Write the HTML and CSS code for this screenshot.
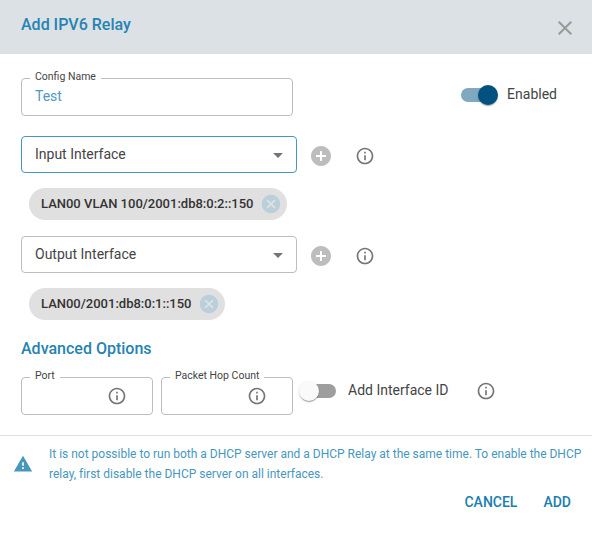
FILE: index.html
```html
<!DOCTYPE html>
<html lang="en">
<head>
<meta charset="utf-8">
<title>Add IPV6 Relay</title>
<link rel="stylesheet" href="styles.css">
</head>
<body>
<svg class="defs" aria-hidden="true">
  <symbol id="info" viewBox="0 0 24 24"><path d="M11 7h2v2h-2zm0 4h2v6h-2zm1-9C6.48 2 2 6.48 2 12s4.48 10 10 10 10-4.48 10-10S17.52 2 12 2zm0 18c-4.41 0-8-3.59-8-8s3.59-8 8-8 8 3.59 8 8-3.59 8-8 8z"/></symbol>
  <symbol id="plus" viewBox="0 0 24 24"><path d="M12 2C6.48 2 2 6.48 2 12s4.48 10 10 10 10-4.48 10-10S17.52 2 12 2zm5 11h-4v4h-2v-4H7v-2h4V7h2v4h4v2z"/></symbol>
  <symbol id="cancel" viewBox="0 0 24 24"><path d="M12 2C6.47 2 2 6.47 2 12s4.47 10 10 10 10-4.47 10-10S17.53 2 12 2zm5 13.59L15.59 17 12 13.41 8.41 17 7 15.59 10.59 12 7 8.41 8.41 7 12 10.59 15.59 7 17 8.41 13.41 12 17 15.59z"/></symbol>
  <symbol id="arrow" viewBox="0 0 24 24"><path d="M7 10l5 5 5-5z"/></symbol>
</svg>
<div class="dialog">
  <header class="header">
    <h2 class="heading title">Add IPV6 Relay</h2>
    <svg class="icon close" viewBox="0 0 24 24"><path d="M19 6.41L17.59 5 12 10.59 6.41 5 5 6.41 10.59 12 5 17.59 6.41 19 12 13.41 17.59 19 19 17.59 13.41 12z"/></svg>
  </header>
  <main class="content">
    <div class="row top">
      <fieldset class="field wide"><legend>Config Name</legend><span class="value">Test</span></fieldset>
      <div class="toggle"><span class="switch on"></span><span class="label">Enabled</span></div>
    </div>
    <div class="row picker">
      <div class="select active"><span class="label">Input Interface</span><svg class="icon"><use href="#arrow"/></svg></div>
      <svg class="icon add"><use href="#plus"/></svg>
      <svg class="icon small"><use href="#info"/></svg>
    </div>
    <div class="chip"><span>LAN00 VLAN 100/2001:db8:0:2::150</span><svg class="icon"><use href="#cancel"/></svg></div>
    <div class="row picker">
      <div class="select"><span class="label">Output Interface</span><svg class="icon"><use href="#arrow"/></svg></div>
      <svg class="icon add"><use href="#plus"/></svg>
      <svg class="icon small"><use href="#info"/></svg>
    </div>
    <div class="chip"><span>LAN00/2001:db8:0:1::150</span><svg class="icon"><use href="#cancel"/></svg></div>
    <h3 class="heading section">Advanced Options</h3>
    <div class="row advanced">
      <fieldset class="field"><legend>Port</legend><svg class="icon small"><use href="#info"/></svg></fieldset>
      <fieldset class="field"><legend>Packet Hop Count</legend><svg class="icon small"><use href="#info"/></svg></fieldset>
      <div class="toggle"><span class="switch"></span><span class="label">Add Interface ID</span><svg class="icon small"><use href="#info"/></svg></div>
    </div>
  </main>
  <footer class="footer">
    <div class="notice">
      <svg class="icon small" viewBox="0 0 24 24"><path d="M1 21h22L12 2 1 21zm12-3h-2v-2h2v2zm0-4h-2v-4h2v4z"/></svg>
      <p>It is not possible to run both a DHCP server and a DHCP Relay at the same time. To enable the DHCP<br>relay, first disable the DHCP server on all interfaces.</p>
    </div>
    <div class="actions"><button>CANCEL</button><button>ADD</button></div>
  </footer>
</div>
</body>
</html>
```

FILE: styles.css
```css
* { box-sizing: border-box; }

body {
  margin: 0;
  background: #fff;
  color: #444;
  font: 14px/20px Roboto, sans-serif;
}

.defs { display: none; }

.icon {
  flex: none;
  width: 24px;
  height: 24px;
  fill: #757575;
}

.icon.small { width: 20px; height: 20px; }

.header {
  display: flex;
  align-items: flex-start;
  justify-content: space-between;
  height: 54px;
  padding: 15px 15px 0 21px;
  background: #dce1e5;
}

.heading {
  margin: 0;
  color: #2583b3;
  font-size: 16px;
  font-weight: 500;
  line-height: 20px;
}

.close { margin-top: 1px; fill: #999; }

.content { padding: 0 21px; }

.row { display: flex; }

.top { justify-content: space-between; padding-top: 24px; }

.field {
  display: flex;
  justify-content: flex-end;
  width: 132px;
  height: 45px;
  min-width: 0;
  margin: -7px 8px 0 0;
  padding: 0 25px 0 13px;
  border: 1px solid #bdbdbd;
  border-radius: 4px;
}

.field legend {
  height: 14px;
  margin-left: -5px;
  padding: 0 5px;
  font-size: 10.5px;
  line-height: 12px;
  white-space: nowrap;
}

.field .icon { margin-top: 2px; }

.wide { justify-content: flex-start; width: 272px; }

.value { margin-top: 1px; color: #4d9abf; }

.toggle { display: flex; align-items: center; height: 20px; }

.label { padding-bottom: 2px; white-space: nowrap; }

.top .toggle { margin: 7px 14px 0 0; }

.switch {
  position: relative;
  width: 34px;
  height: 14px;
  margin-right: 12px;
  border-radius: 7px;
  background: #9e9e9e;
}

.switch::after {
  content: "";
  position: absolute;
  top: -3px;
  left: -3px;
  width: 20px;
  height: 20px;
  border-radius: 50%;
  background: #fafafa;
  box-shadow: 0 2px 1px -1px rgba(0,0,0,.2), 0 1px 1px rgba(0,0,0,.14), 0 1px 3px rgba(0,0,0,.12);
}

.switch.on { background: #80a8bf; }

.switch.on::after { left: 17px; background: #00517f; }

.picker { align-items: center; height: 37px; }

.top + .picker { margin-top: 20px; }

.chip + .picker { margin-top: 16px; }

.select {
  display: flex;
  align-items: center;
  justify-content: space-between;
  width: 276px;
  height: 37px;
  padding: 0 6px 0 13px;
  border: 1px solid #bdbdbd;
  border-radius: 4px;
}

.select.active { border-color: #4797bd; }

.picker .add { margin: 3px 22px 0 12px; fill: #bdbdbd; }

.picker .small { margin-top: 3px; }

.chip {
  display: flex;
  align-items: center;
  justify-content: space-between;
  width: fit-content;
  height: 32px;
  margin: 15px 0 0 8px;
  padding: 0 5px 0 12px;
  border-radius: 16px;
  background: #e0e0e0;
  color: #333;
  font-size: 13px;
  font-weight: 500;
  white-space: nowrap;
}

.chip .icon { width: 22px; height: 22px; margin-left: 6px; fill: #b9d0da; }

.section { margin-top: 19px; }

.advanced { margin-top: 18px; }

.advanced .toggle { margin: 4px 0 0 1px; }

.advanced .toggle .icon { margin-left: 27px; }

.footer { margin-top: 20px; border-top: 1px solid #e0e0e0; }

.notice {
  display: flex;
  padding: 8px 0 0 13px;
  color: #4797bd;
  font-size: 12px;
  letter-spacing: -0.005px;
}

.notice .icon { margin: 10px 16px 0 0; fill: #4797bd; }

.notice p { margin: 0; white-space: nowrap; }

.actions {
  display: flex;
  justify-content: flex-end;
  gap: 26px;
  padding: 8px 21px 0 0;
}

.actions button {
  padding: 0;
  border: 0;
  background: none;
  color: #1a7eb0;
  font: 500 14px/20px Roboto, sans-serif;
}
```
